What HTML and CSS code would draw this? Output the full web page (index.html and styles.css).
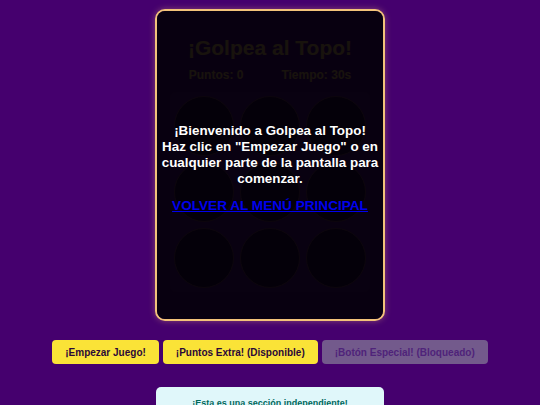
FILE: index.html
```html
<!DOCTYPE html>
<html lang="es">
<head>
<meta charset="utf-8">
<title>¡Golpea al Topo!</title>
<link rel="stylesheet" href="styles.css">
</head>
<body>
<main class="page">
  <section class="game">
    <h1 class="title">¡Golpea al Topo!</h1>
    <div class="stats">
      <span>Puntos: 0</span>
      <span>Tiempo: 30s</span>
    </div>
    <div class="grid">
      <div class="hole"></div><div class="hole"></div><div class="hole"></div>
      <div class="hole"></div><div class="hole"></div><div class="hole"></div>
      <div class="hole"></div><div class="hole"></div><div class="hole"></div>
    </div>
    <div class="overlay">
      <p class="welcome">¡Bienvenido a Golpea al Topo!<br>Haz clic en "Empezar Juego" o en cualquier parte de la pantalla para comenzar.</p>
      <a class="back" href="#">VOLVER AL MENÚ PRINCIPAL</a>
    </div>
  </section>
  <div class="controls">
    <button class="btn">¡Empezar Juego!</button>
    <button class="btn">¡Puntos Extra! (Disponible)</button>
    <button class="btn btn-locked">¡Botón Especial! (Bloqueado)</button>
  </div>
  <section class="extra">
    <p>¡Esta es una sección independiente!</p>
  </section>
</main>
</body>
</html>
```
FILE: styles.css
```css
* { box-sizing: border-box; }
html, body { margin: 0; padding: 0; }
body {
  background: #45006e;
  font-family: "Liberation Sans", Arial, sans-serif;
  overflow: hidden;
}
.page {
  display: flex;
  flex-direction: column;
  align-items: center;
  padding-top: 9px;
}
.game {
  position: relative;
  width: 230px;
  height: 312px;
  border: 2px solid #f2c27a;
  border-radius: 10px;
  background: #3a0a5a;
  box-shadow: 0 0 6px rgba(255, 200, 120, 0.35);
  display: flex;
  flex-direction: column;
  align-items: center;
  padding-top: 24px;
  overflow: hidden;
}
.title {
  margin: 0;
  font-size: 21px;
  font-weight: bold;
  color: #ffeb3b;
  line-height: 26px;
}
.stats {
  display: flex;
  gap: 38px;
  margin-top: 7px;
  font-size: 12px;
  font-weight: bold;
  color: #ffeb3b;
}
.grid {
  display: grid;
  grid-template-columns: repeat(3, 60px);
  gap: 6px;
  padding: 4px;
  margin-top: 10px;
  background: rgba(255, 255, 255, 0.05);
  border-radius: 6px;
}
.hole {
  width: 60px;
  height: 60px;
  border-radius: 50%;
  background: #000;
  border: 1px solid #6b4a30;
}
.overlay {
  position: absolute;
  inset: 0;
  background: rgba(4, 0, 10, 0.92);
  display: flex;
  flex-direction: column;
  align-items: center;
  justify-content: center;
  padding: 6px 0 0;
  text-align: center;
}
.welcome {
  margin: 0;
  color: #fff;
  font-size: 13.4px;
  font-weight: bold;
  line-height: 16px;
}
.back {
  margin-top: 11px;
  color: #0000ee;
  font-size: 13.6px;
  font-weight: bold;
  text-decoration: underline;
}
.controls {
  display: flex;
  gap: 4px;
  margin-top: 19px;
}
.btn {
  font-family: "Liberation Sans", Arial, sans-serif;
  font-size: 10px;
  font-weight: bold;
  height: 24px;
  padding: 0 13px;
  border: none;
  border-radius: 4px;
  background: #fae337;
  color: #2a0838;
}
.btn-locked {
  background: #735a8c;
  color: #4f237a;
}
.extra {
  margin-top: 23px;
  width: 228px;
  background: #e0f7fa;
  border-radius: 5px;
  padding: 11px 8px;
  text-align: center;
}
.extra p {
  margin: 0;
  font-size: 9px;
  font-weight: bold;
  color: #00695c;
}
```
